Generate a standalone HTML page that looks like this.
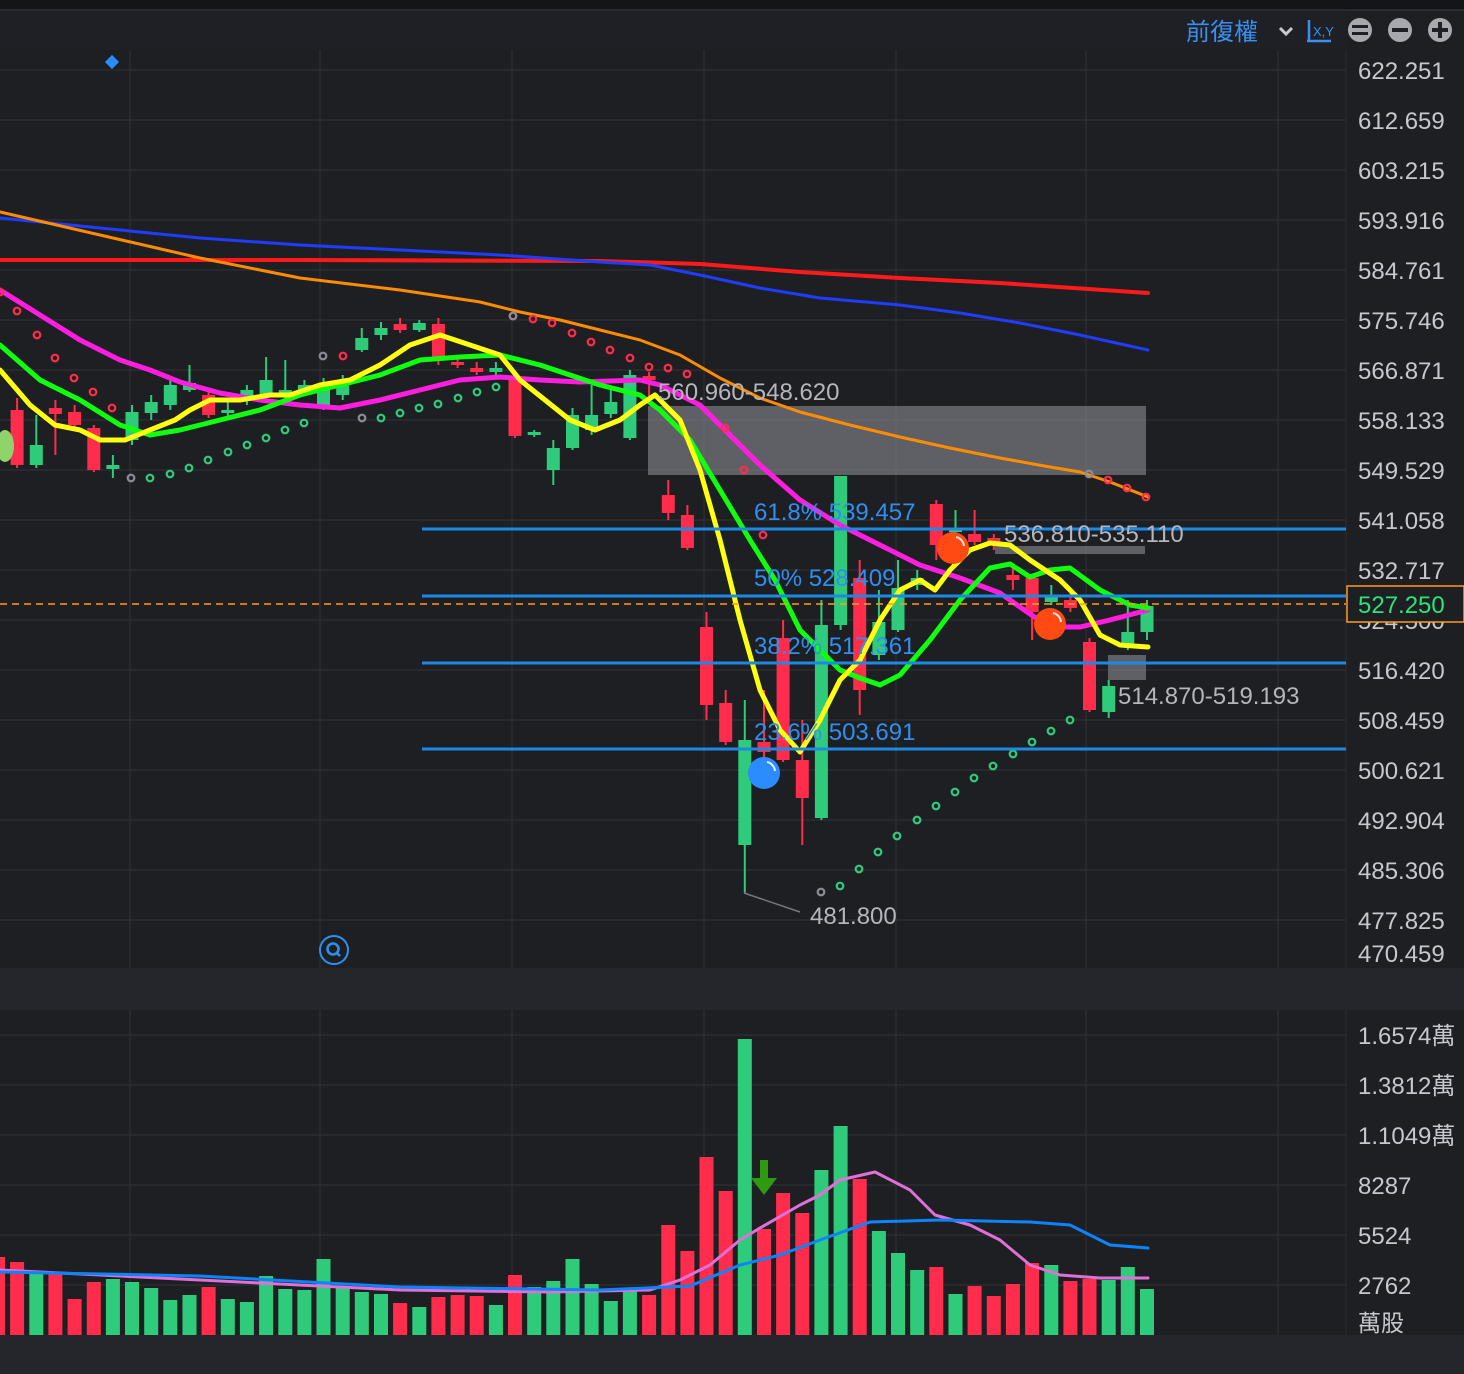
<!DOCTYPE html>
<html><head><meta charset="utf-8">
<style>
html,body{margin:0;padding:0;background:#1e1f23;}
body{width:1464px;height:1374px;overflow:hidden;position:relative;font-family:"Liberation Sans","Noto Sans CJK TC",sans-serif;}
svg{position:absolute;left:0;top:0;}
</style></head>
<body>
<svg id="s" width="1464" height="1374" viewBox="0 0 1464 1374" xmlns="http://www.w3.org/2000/svg" font-family="Liberation Sans, Noto Sans CJK TC, sans-serif">
<rect x="0" y="0" width="1464" height="1374" fill="#1e1f23"/>
<rect x="0" y="0" width="1464" height="9" fill="#141518"/>
<rect x="0" y="9" width="1464" height="2" fill="#2a2b30"/>
<rect x="0" y="11" width="1346" height="39" fill="#1f2025"/>
<rect x="0" y="968" width="1464" height="42" fill="#25262b"/>
<rect x="0" y="1335" width="1464" height="39" fill="#25262b"/>
<line x1="1346" y1="50" x2="1346" y2="968" stroke="#2a2c31" stroke-width="1"/>
<line x1="1346" y1="1010" x2="1346" y2="1335" stroke="#2a2c31" stroke-width="1"/>
<g id="grid" stroke="#2a2d33" stroke-width="1.5"></g>
<g id="c"></g>
</svg>
<script>
var s=document.getElementById('c');var g=document.getElementById('grid');
var h='';var gh='';
for(var y=70;y<=920;y+=50)gh+='<line x1="0" y1="'+y+'" x2="1346" y2="'+y+'"/>';
[1035,1085,1135,1185,1235,1285].forEach(function(y){gh+='<line x1="0" y1="'+y+'" x2="1346" y2="'+y+'"/>';});
[130,320,512,704,896,1086,1278].forEach(function(x){gh+='<line x1="'+x+'" y1="50" x2="'+x+'" y2="968"/><line x1="'+x+'" y1="1010" x2="'+x+'" y2="1335"/>';});
g.innerHTML=gh;
var R='#ff2d4b',G='#2ecc7a';
// volume
var vol=[['r',1257],['r',1262],['g',1274],['r',1272],['r',1299],['r',1282],['g',1279],['g',1282],['g',1288],['g',1300],['g',1295],['r',1287],['g',1299],['g',1302],['g',1276],['g',1289],['g',1290],['g',1259],['g',1287],['g',1292],['g',1294],['r',1303],['g',1307],['r',1297],['r',1295],['r',1296],['g',1305],['r',1275],['g',1287],['g',1281],['g',1259],['g',1284],['g',1301],['g',1289],['r',1295],['r',1225],['r',1251],['r',1157],['r',1191],['g',1039],['r',1229],['r',1193],['r',1213],['g',1170],['g',1126],['r',1179],['g',1231],['g',1253],['g',1270],['r',1267],['g',1294],['r',1286],['r',1296],['r',1284],['r',1263],['g',1265],['r',1281],['r',1279],['g',1280],['g',1267],['g',1289]];
vol.forEach(function(v,i){var x=19.15*i-9;h+='<rect x="'+x.toFixed(1)+'" y="'+v[1]+'" width="14" height="'+(1335-v[1])+'" fill="'+(v[0]=='r'?R:G)+'"/>';});
function pl(pts,col,w){return '<polyline points="'+pts+'" fill="none" stroke="'+col+'" stroke-width="'+w+'" stroke-linejoin="round" stroke-linecap="round"/>';}
h+=pl('0,1270 200,1280 400,1290 550,1292 650,1290 680,1280 710,1265 740,1240 760,1228 800,1205 820,1195 840,1180 875,1172 910,1190 935,1215 970,1225 1000,1240 1030,1265 1060,1275 1100,1278 1148,1278','#e070d8',3);
h+=pl('0,1272 200,1276 400,1287 600,1290 690,1286 740,1265 780,1255 820,1240 870,1222 940,1220 1030,1222 1070,1225 1110,1245 1148,1248','#0a84ff',3);
// arrow
h+='<rect x="760" y="1160" width="8" height="20" fill="#2e9a10"/><polygon points="751,1178 777,1178 764,1195" fill="#2e9a10"/>';
// candles
var c=[[1,'r',410,465,398,468],[2,'g',445,465,415,468],[3,'r',408,414,400,455],[4,'r',412,425,405,428],[5,'r',428,470,425,472],[6,'g',465,469,455,478],[7,'g',412,440,405,445],[8,'g',402,413,395,420],[9,'g',385,405,380,410],[10,'g',383,390,365,392],[11,'r',395,415,392,418],[12,'g',410,413,398,416],[13,'g',390,400,385,405],[14,'g',380,395,357,397],[15,'g',390,393,360,400],[16,'g',385,392,380,395],[17,'g',385,405,378,410],[18,'g',382,395,375,400],[19,'g',338,350,328,352],[20,'g',328,335,322,340],[21,'r',324,330,318,333],[22,'g',323,330,320,332],[23,'r',324,360,318,365],[24,'r',362,365,358,368],[25,'r',368,372,362,375],[26,'g',368,372,362,375],[27,'r',380,436,378,438],[28,'g',432,435,430,437],[29,'g',448,470,440,485],[30,'g',415,448,408,450],[31,'g',415,430,385,435],[32,'g',402,414,388,418],[33,'g',375,438,370,440],[34,'r',376,380,372,400],[35,'r',495,513,480,520],[36,'r',515,548,505,550],[37,'r',627,705,612,720],[38,'r',703,742,690,745],[39,'g',740,845,700,893],[40,'r',742,752,690,770],[41,'r',638,760,620,762],[42,'r',760,798,720,845],[43,'g',625,818,600,820],[44,'g',476,625,476,630],[45,'r',578,690,560,715],[46,'g',622,655,590,660],[47,'g',588,630,560,632],[48,'g',578,585,570,590],[49,'r',504,545,500,560],[50,'g',528,532,510,535],[51,'r',534,542,510,545],[52,'r',538,545,534,550],[53,'r',575,580,565,590],[54,'r',578,612,575,640],[55,'g',597,602,585,605],[56,'r',600,608,590,612],[57,'r',642,710,638,712],[58,'g',686,712,680,718],[59,'g',632,645,600,650],[60,'g',606,632,600,640]];
c.forEach(function(k){var cx=19.15*k[0]-2;var col=k[1]=='r'?R:G;h+='<line x1="'+cx.toFixed(1)+'" y1="'+k[4]+'" x2="'+cx.toFixed(1)+'" y2="'+k[5]+'" stroke="'+col+'" stroke-width="2"/><rect x="'+(cx-6.5).toFixed(1)+'" y="'+k[2]+'" width="13" height="'+Math.max(3,k[3]-k[2])+'" fill="'+col+'"/>';});
// gray boxes
h+='<rect x="648" y="406" width="498" height="69" fill="#8a8c93" opacity="0.6"/>';
h+='<rect x="995" y="546" width="150" height="8" fill="#8a8c93" opacity="0.6"/>';
h+='<rect x="1108" y="655" width="38" height="25" fill="#8a8c93" opacity="0.6"/>';
// MAs
h+=pl('0,260 300,260 600,261 700,264 800,272 900,278 1000,283 1148,293','#ff1a1a',4);
h+=pl('0,218 100,228 200,238 300,245 400,250 500,255 600,262 650,265 700,275 760,288 820,298 900,305 960,313 1020,323 1080,335 1148,350','#1f3cff',3);
h+=pl('0,212 100,235 200,258 300,278 400,290 480,302 520,312 560,320 600,330 640,340 680,355 720,378 760,398 800,412 850,425 900,437 950,448 1000,458 1050,467 1080,472 1110,482 1148,497','#ff8c00',3);
h+=pl('0,290 40,315 80,340 120,360 150,370 180,382 220,393 260,400 300,405 340,408 380,400 420,390 460,380 500,377 540,380 580,382 640,380 660,385 700,405 730,435 760,465 800,500 840,525 880,545 920,565 960,578 1000,593 1030,614 1050,627 1080,627 1110,620 1148,610','#ff1ee0',5);
h+=pl('0,345 40,380 80,400 120,425 150,435 180,430 220,420 260,410 300,395 340,385 380,375 420,360 460,357 500,355 540,365 570,375 600,385 640,395 660,410 690,440 720,490 750,540 775,580 800,630 820,650 840,670 860,678 880,685 900,675 930,640 960,600 990,568 1010,564 1030,577 1050,570 1070,568 1100,590 1130,605 1148,608','#0fff0f',5);
h+=pl('0,370 30,405 55,425 80,430 100,440 125,440 150,430 175,420 190,410 210,400 240,400 270,395 290,395 320,385 350,380 380,365 410,345 440,335 470,345 500,355 520,380 545,400 570,420 595,430 620,420 640,405 655,395 680,420 700,470 720,540 740,620 760,690 780,730 800,752 820,720 840,680 860,660 880,620 900,590 920,580 935,590 950,570 970,550 990,543 1010,545 1030,560 1060,580 1080,600 1100,635 1120,645 1148,647','#ffff10',5);
// SAR dots
function dots(arr,col){arr.forEach(function(p){h+='<circle cx="'+p[0]+'" cy="'+p[1]+'" r="3.3" fill="none" stroke="'+col+'" stroke-width="2.2"/>';});}
dots([[0,292],[17,311],[37,335],[55,358],[74,378],[93,392],[112,408],[343,356],[513,316],[533,319],[552,323],[572,333],[591,342],[610,350],[630,358],[649,367],[668,368],[687,374],[725,428],[744,470],[763,535],[1108,480],[1127,488],[1146,497]],'#ff2d4b');
dots([[150,478],[170,474],[189,468],[208,460],[228,452],[247,445],[266,438],[285,430],[304,423],[381,418],[400,413],[419,408],[438,404],[458,398],[477,392],[496,387],[840,886],[859,869],[878,852],[897,836],[917,820],[936,806],[955,792],[974,778],[993,766],[1013,754],[1032,742],[1051,731],[1070,720]],'#2ecc7a');
dots([[131,478],[323,356],[362,418],[513,316],[821,892],[1089,474]],'#8a8d95');
// fib lines
[529,596,663,749].forEach(function(y){h+='<line x1="422" y1="'+y+'" x2="1346" y2="'+y+'" stroke="#1e88e5" stroke-width="3"/>';});
h+='<line x1="0" y1="604" x2="1346" y2="604" stroke="#ff9a1f" stroke-width="1.5" stroke-dasharray="7,5"/>';
function t(x,y,str,col,sz){h+='<text x="'+x+'" y="'+y+'" fill="'+col+'" font-size="'+sz+'">'+str+'</text>';}
t(754,520,'61.8% 539.457','#2f8ff0',24);t(754,586,'50% 528.409','#2f8ff0',24);t(754,654,'38.2% 517.361','#2f8ff0',24);t(754,740,'23.6% 503.691','#2f8ff0',24);
t(658,400,'560.960-548.620','#b4b6bc',24);t(1004,542,'536.810-535.110','#b4b6bc',24);t(1118,704,'514.870-519.193','#b4b6bc',24);t(810,924,'481.800','#b4b6bc',24);
h+='<line x1="744" y1="893" x2="800" y2="912" stroke="#777" stroke-width="1.5"/>';
// balls
function ball(x,y,col){h+='<circle cx="'+x+'" cy="'+y+'" r="16" fill="'+col+'"/><path d="M'+(x+3)+','+(y-11)+' A10,10 0 0 1 '+(x+11)+','+(y-2)+'" fill="none" stroke="#fff" stroke-width="2" opacity="0.85"/>';}
ball(953,548,'#ff4a14');ball(1050,624,'#ff4a14');ball(764,773,'#2a8cff');
// apple icon
h+='<ellipse cx="5" cy="446" rx="9" ry="16" fill="#8fd46a"/>';
// diamond
h+='<rect x="107" y="57" width="10" height="10" fill="#2a8cff" transform="rotate(45 112 62)"/>';
// Q icon
h+='<circle cx="334" cy="950" r="14" fill="none" stroke="#2f8ff0" stroke-width="2"/><circle cx="333" cy="949" r="5.5" fill="none" stroke="#2f8ff0" stroke-width="2.6"/><line x1="336" y1="952" x2="340" y2="956" stroke="#2f8ff0" stroke-width="2.6"/>';
// axis labels
var pl2=[['622.251',70],['612.659',120],['603.215',170],['593.916',220],['584.761',270],['575.746',320],['566.871',370],['558.133',420],['549.529',470],['541.058',520],['532.717',570],['524.500',620],['516.420',670],['508.459',720],['500.621',770],['492.904',820],['485.306',870],['477.825',920],['470.459',953]];
pl2.forEach(function(p){t(1358,p[1]+9,p[0],'#c5c8ce',24);});
h+='<rect x="1347" y="586" width="117" height="36" fill="#1e1f23" stroke="#ff9a1f" stroke-width="1.5"/>';
t(1358,613,'527.250','#2ee27a',24);
[['1.6574萬',1035],['1.3812萬',1085],['1.1049萬',1135],['8287',1185],['5524',1235],['2762',1285]].forEach(function(p){t(1358,p[1]+9,p[0],'#c5c8ce',24);});
t(1358,1331,'萬股','#c5c8ce',23);
// toolbar
t(1186,40,'前復權','#3a8ff0',24);
h+='<polyline points="1280,28 1286,34 1292,28" fill="none" stroke="#c8cad0" stroke-width="3"/>';
h+='<line x1="1309" y1="20" x2="1309" y2="42" stroke="#3a8ff0" stroke-width="2.5"/><line x1="1307" y1="41" x2="1331" y2="41" stroke="#3a8ff0" stroke-width="2.5"/>';
t(1313,36,'X,Y','#3a8ff0',13);
h+='<circle cx="1360" cy="30" r="12" fill="#a7a9ae"/><rect x="1352" y="25" width="16" height="3" fill="#1f2025"/><rect x="1352" y="32" width="16" height="3" fill="#1f2025"/>';
h+='<circle cx="1400" cy="30" r="12" fill="#a7a9ae"/><rect x="1392" y="28" width="16" height="4" fill="#1f2025"/>';
h+='<circle cx="1440" cy="30" r="12" fill="#a7a9ae"/><rect x="1432" y="28" width="16" height="4" fill="#1f2025"/><rect x="1438" y="22" width="4" height="16" fill="#1f2025"/>';
s.innerHTML=h;
</script>
</body></html>
